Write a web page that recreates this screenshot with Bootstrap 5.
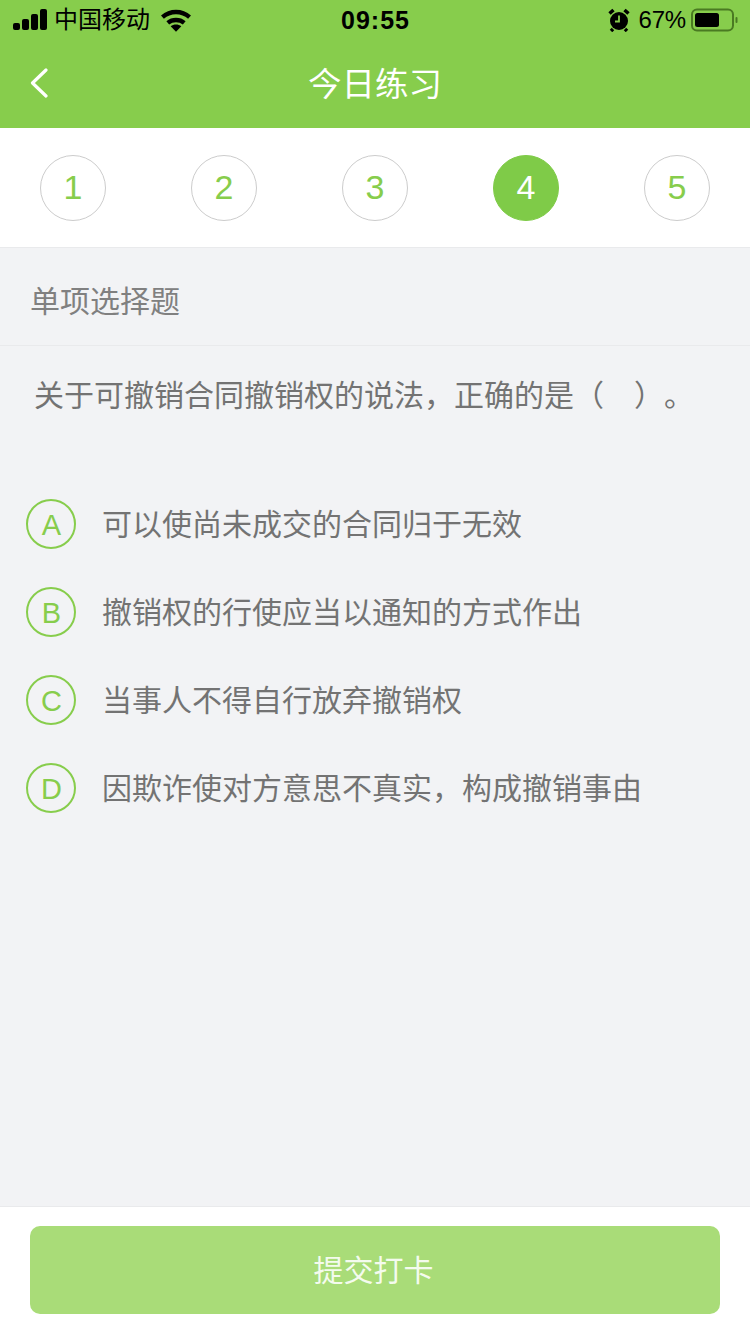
<!DOCTYPE html>
<html lang="zh">
<head>
<meta charset="utf-8">
<title>今日练习</title>
<link href="https://cdn.jsdelivr.net/npm/bootstrap@5.3.0/dist/css/bootstrap.min.css" rel="stylesheet">
<style>
html,body{height:100%}
body{width:750px;height:1334px;overflow:hidden;background:#f2f3f5;font-family:"Liberation Sans","Noto Sans CJK SC",sans-serif;color:#666;text-spacing-trim:space-all}
.page-shell{height:1334px}
.top-head{background:#87cd4c;height:128px}
.status-row{height:40px;padding:0 12px 0 13px;color:#000}
.status-text{font-size:24px;line-height:40px}
.status-time{font-size:25px;font-weight:700;letter-spacing:1px;line-height:40px}
.status-side{width:280px}
.carrier-text{margin-left:7px}
.wifi-mark{margin-left:11px}
.pct-text{margin:0 5px 0 9px;letter-spacing:-.2px}
.title-row{height:88px;padding-top:2px}
.back-btn{position:absolute;left:30px;top:28px}
.title-text{color:#fff;font-size:33.500px;line-height:40px}
.step-bar{height:120px;background:#fff;border-bottom:1px solid #e9eaec;padding:0 40px}
.step-dot{width:66px;height:66px;border:1px solid #ccc;border-radius:50%;color:#87cd4c;font-size:34px;background:#fff}
.step-dot.is-on{background:#7fcb48;border-color:#7fcb48;color:#fff}
.type-row{height:98px;border-bottom:1px solid #e9eaec;padding-left:30px;color:#808080;font-size:30px;line-height:108px}
.ask-text{font-size:30px;line-height:40px;padding:30px 0 0 34px;height:134px;color:#737373;white-space:nowrap}
.opt-row{height:88px;padding-left:26px}
.opt-mark{width:50px;height:50px;border:2px solid #87cd4c;border-radius:50%;color:#87cd4c;font-size:29px;flex:none;padding:3px 0 0 1px}
.opt-text{margin-left:26px;font-size:30px;color:#737373;white-space:nowrap}
.foot-bar{height:128px;background:#fff;border-top:1px solid #e9eaec;padding:19px 30px 0}
.foot-btn{width:690px;height:88px;background:#a9dc78;border:0;border-radius:10px;color:#f4fbee;font-size:30px;padding:0 3px 0 0}
</style>
</head>
<body>
<div class="page-shell d-flex flex-column">
  <header class="top-head flex-shrink-0">
    <div class="status-row d-flex align-items-center justify-content-between">
      <div class="status-side d-flex align-items-center">
        <svg width="34" height="22" viewBox="0 0 34 22" fill="#000"><rect x="0" y="14" width="7" height="7" rx="2"/><rect x="9" y="10" width="7" height="11" rx="2"/><rect x="18" y="5" width="7" height="16" rx="2"/><rect x="27" y="0" width="7" height="21" rx="2"/></svg>
        <span class="status-text carrier-text">中国移动</span>
        <svg class="wifi-mark" width="30" height="23" viewBox="0 0 31 23" fill="none" stroke="#000" stroke-width="4.500"><path d="M1.500 8C9.500 1 21.500 1 29.500 8"/><path d="M7 14c4.800-4 12.200-4 17 0"/><path d="M15.500 23l-5.500-5.500c3-2.500 8-2.500 11 0z" fill="#000" stroke="none"/></svg>
      </div>
      <span class="status-time">09:55</span>
      <div class="status-side d-flex align-items-center justify-content-end">
        <svg width="22" height="24" viewBox="0 0 22 24"><circle cx="11" cy="13" r="9" fill="#000"/><path d="M1.500 5.500l4-3.500M20.500 5.500l-4-3.500M5 21l-2 2M17 21l2 2" stroke="#000" stroke-width="3.500"/><path d="M11 7.500V13.500H7" stroke="#87cd4c" stroke-width="1.800" fill="none"/></svg>
        <span class="status-text pct-text">67%</span>
        <svg width="47" height="24" viewBox="0 0 47 24"><rect x="1" y="1.500" width="41" height="21" rx="5" fill="none" stroke="#4a7a22" stroke-width="2"/><rect x="4" y="5" width="24" height="14" rx="2.500" fill="#000"/><rect x="44.500" y="9" width="2" height="6" rx="1" fill="#4a7a22"/></svg>
      </div>
    </div>
    <div class="title-row position-relative d-flex align-items-center justify-content-center">
      <svg class="back-btn" width="18" height="30" viewBox="0 0 18 30" fill="none" stroke="#fff" stroke-width="3.200" stroke-linecap="round" stroke-linejoin="round"><path d="M16 2L2.500 15 16 28"/></svg>
      <span class="title-text">今日练习</span>
    </div>
  </header>
  <nav class="step-bar flex-shrink-0 d-flex align-items-center justify-content-between">
    <div class="step-dot d-flex align-items-center justify-content-center">1</div>
    <div class="step-dot d-flex align-items-center justify-content-center">2</div>
    <div class="step-dot d-flex align-items-center justify-content-center">3</div>
    <div class="step-dot is-on d-flex align-items-center justify-content-center">4</div>
    <div class="step-dot d-flex align-items-center justify-content-center">5</div>
  </nav>
  <main class="flex-grow-1">
    <div class="type-row">单项选择题</div>
    <div class="ask-text">关于可撤销合同撤销权的说法，正确的是（　）。</div>
    <div class="opt-row d-flex align-items-center"><span class="opt-mark d-flex align-items-center justify-content-center">A</span><span class="opt-text">可以使尚未成交的合同归于无效</span></div>
    <div class="opt-row d-flex align-items-center"><span class="opt-mark d-flex align-items-center justify-content-center">B</span><span class="opt-text">撤销权的行使应当以通知的方式作出</span></div>
    <div class="opt-row d-flex align-items-center"><span class="opt-mark d-flex align-items-center justify-content-center">C</span><span class="opt-text">当事人不得自行放弃撤销权</span></div>
    <div class="opt-row d-flex align-items-center"><span class="opt-mark d-flex align-items-center justify-content-center">D</span><span class="opt-text">因欺诈使对方意思不真实，构成撤销事由</span></div>
  </main>
  <footer class="foot-bar flex-shrink-0">
    <button type="button" class="btn foot-btn d-block">提交打卡</button>
  </footer>
</div>
<script src="https://cdn.jsdelivr.net/npm/bootstrap@5.3.0/dist/js/bootstrap.bundle.min.js"></script>
</body>
</html>
